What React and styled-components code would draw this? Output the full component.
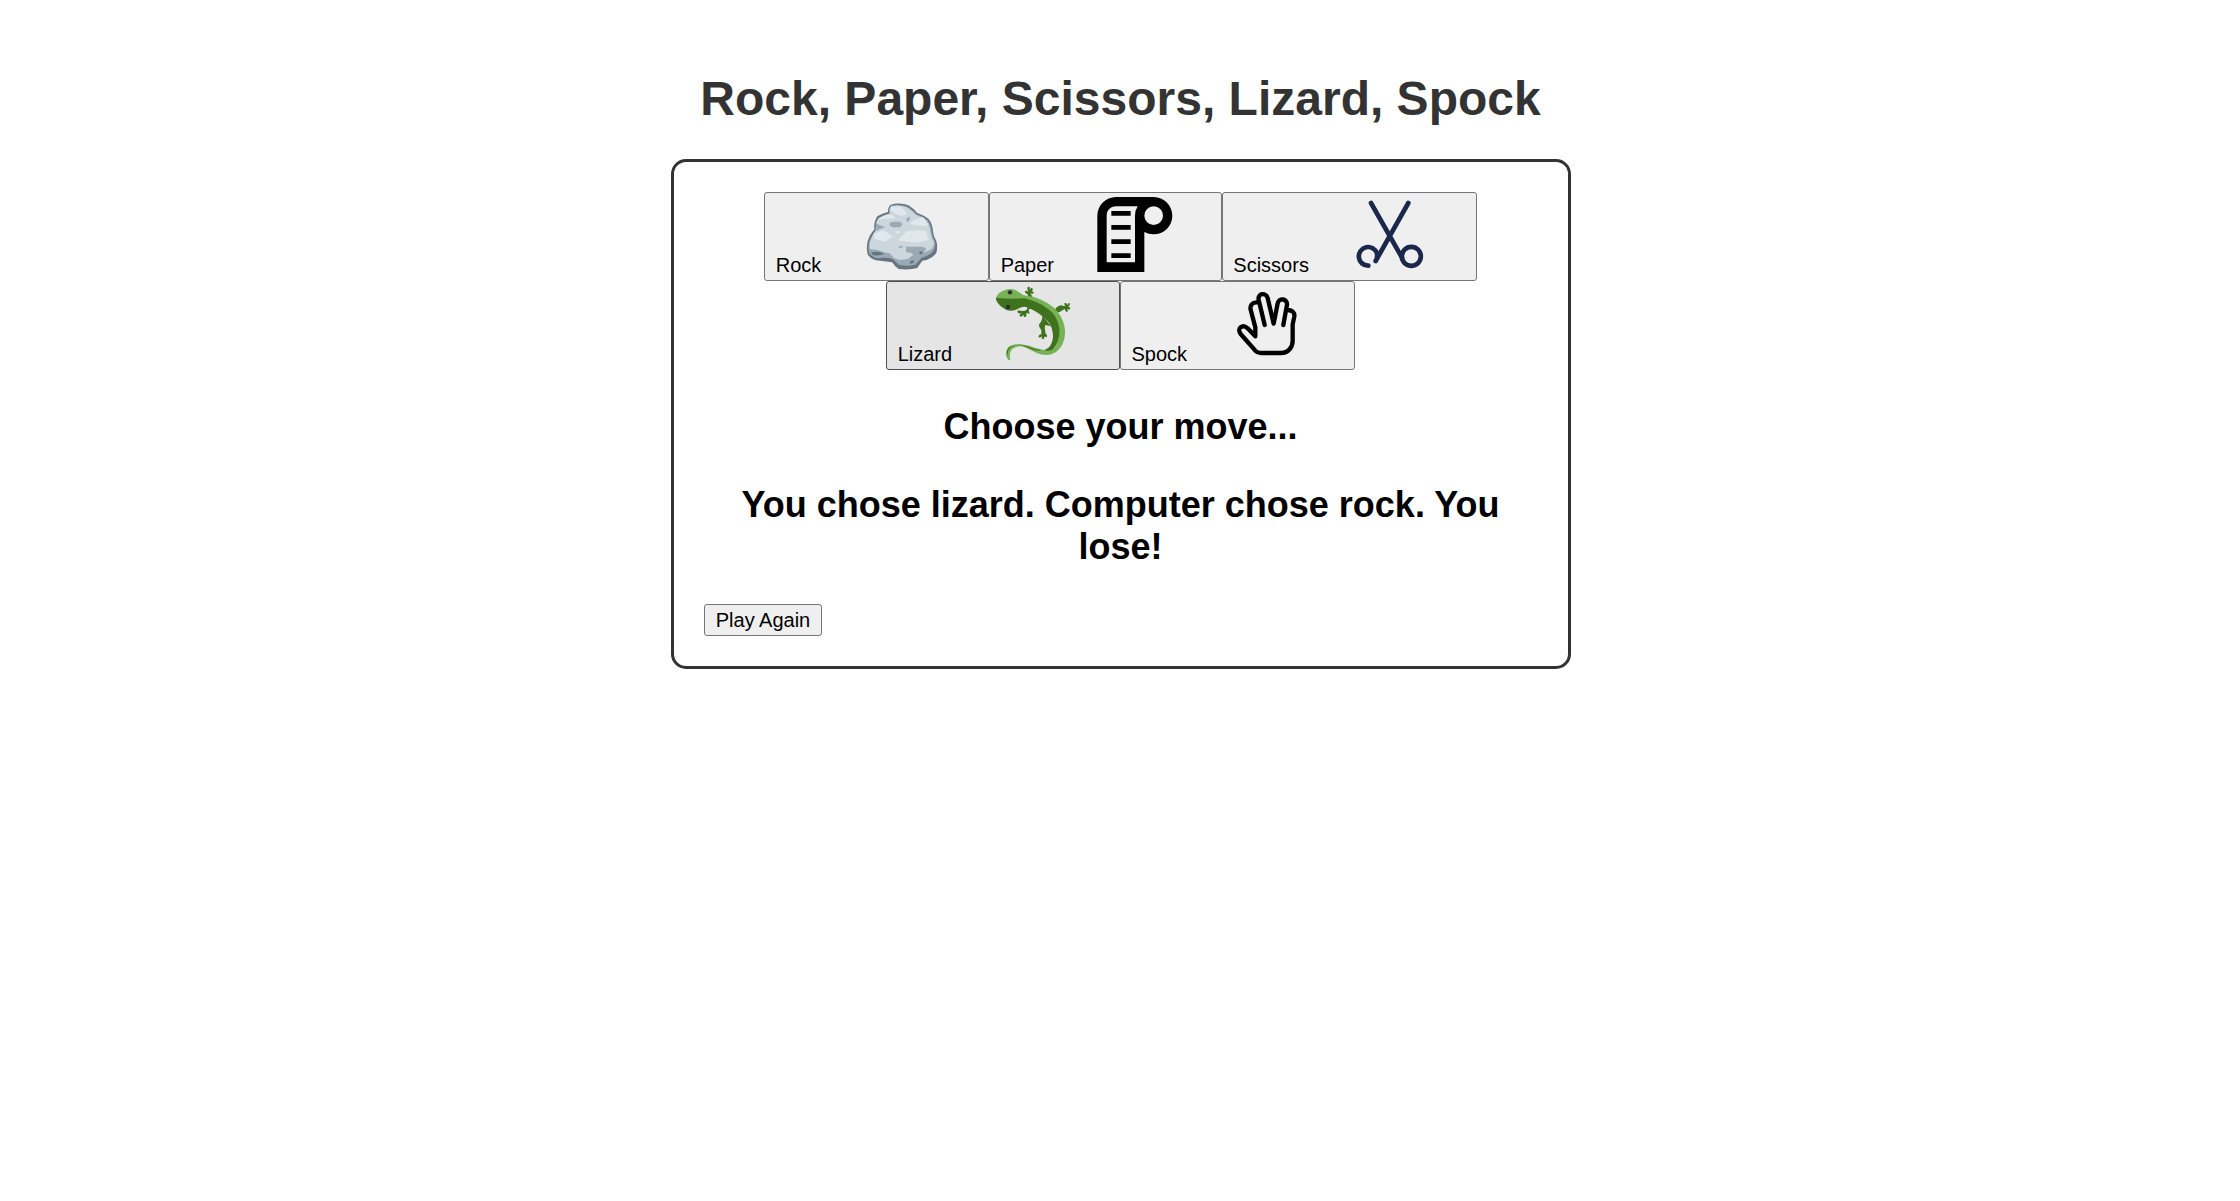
import React from "react";
import styled, { createGlobalStyle } from "styled-components";

const GlobalStyle = createGlobalStyle`
  body {
    margin: 0;
    padding: 0 0 0 2px;
    background: #fff;
    color: #000;
    font-family: "Liberation Sans", Arial, sans-serif;
  }
`;

const Page = styled.main`
  display: flex;
  flex-direction: column;
  align-items: center;
  padding-top: 71px;
`;

const Title = styled.h1`
  margin: 0 1px 33px 0;
  color: #333;
  font-size: 48px;
  line-height: 55px;
`;

const Game = styled.section`
  box-sizing: border-box;
  width: 900px;
  padding: 30px;
  border: 3px solid #333;
  border-radius: 15px;
`;

const Moves = styled.div`
  display: flex;
  flex-wrap: wrap;
  justify-content: center;
  padding: 0 46px 0 45px;
`;

const Button = styled.button`
  box-sizing: border-box;
  border: 1px solid ${(p) => (p.$hovered ? "#4f4f4f" : "#767676")};
  border-radius: 3px;
  background: ${(p) => (p.$hovered ? "#e5e5e5" : "#efefef")};
  color: #000;
  font-family: inherit;
  font-size: 20px;
  line-height: 23px;
`;

const MoveButton = styled(Button)`
  display: flex;
  align-items: flex-end;
  gap: 4px;
  height: 89px;
  padding: 0 8.8px 3px 10.5px;
`;

const PlayAgain = styled(Button)`
  display: block;
  width: 118px;
  height: 32px;
  padding: 0;
  white-space: nowrap;
`;

const Art = styled.svg`
  width: 154px;
  height: 75px;
  margin-bottom: 5px;
  overflow: visible;
`;

const Message = styled.h2`
  margin: 36px 1px 36px 0;
  font-size: 36px;
  line-height: 42px;
  text-align: center;
`;

const RockArt = () => (
  <Art viewBox="-75 21 462 225">
    <path fill="#66757f" d="M121 45Q148 36 175 46Q190 55 201 68Q222 76 235 86Q246 97 249 123Q249 138 259 153Q264 171 259 188Q250 203 232 209L217 212Q208 224 202 234Q178 241 146 237Q134 230 127 217L78 211Q60 206 53 193Q48 174 53 153Q58 135 73 118Q71 94 82 79Q97 70 114 66Q114 51 121 45Z" />
    <path fill="#9aaab4" d="M123 48Q148 41 172 50Q187 60 199 72Q220 80 232 90Q242 101 245 125Q246 140 255 155Q257 174 250 184Q238 197 215 203Q205 214 196 224Q168 230 146 224Q136 213 128 207Q103 201 83 205Q65 202 57 188Q53 170 58 153Q64 138 77 122Q75 98 86 84Q98 75 119 70Q117 54 123 48Z" />
    <path fill="#ccd6dd" d="M123 48Q148 43 170 52Q187 61 197 74Q217 81 229 92Q239 104 241 126Q244 143 252 158Q251 174 239 180L221 189L217 174L168 170L170 186Q184 184 190 194L174 207L148 210L132 204L119 190Q102 188 83 180L60 177Q57 160 64 145Q68 133 78 121L105 112L80 102Q77 90 90 83Q104 76 120 72Q116 58 123 48Z" />
    <path fill="#e1e8ed" d="M124 52Q145 46 157 53L172 72L155 78L137 71L119 60ZM85 86Q106 74 120 72L139 84L91 88ZM179 101L191 91L218 81Q230 90 233 107Q211 108 194 105ZM70 132L98 121L130 139L104 156L73 146ZM148 146L170 124L206 120L228 124L237 148Q216 159 179 156L148 152ZM135 126L143 122L151 127L142 132Z" />
    <path fill="#9aaab4" d="M119 98L130 95H149L158 102L151 112H129L119 107ZM79 103L105 111L75 123ZM172 83L180 80L178 92L171 95L168 89ZM144 170L151 167L160 171L152 175ZM169 170H218L229 177L220 189L196 191L168 186Z" />
    <path fill="#66757f" d="M63 187Q85 182 104 191Q93 198 69 196ZM207 187Q213 180 219 187Q217 194 210 192ZM179 217Q185 208 193 214Q190 223 181 221ZM103 205Q119 202 128 208L137 225Q127 218 122 213Z" />
  </Art>
);

const PaperArt = () => (
  <Art viewBox="-66 21 462 225">
    <path fillRule="evenodd" d="M108 21H221C252 21 277 46 277 77C277 108 252 133 221 133Q205 133 193 126V246H52V77C52 46 77 21 108 21ZM108 49C92 49 80 61 80 77V217H165V77Q165 61 173 49ZM221 49A28 28 0 1 0 221 105A28 28 0 1 0 221 49ZM94 63H152V77H94ZM94 105H152V119H94ZM94 148H152V162H94ZM94 190H152V204H94Z" />
  </Art>
);

const ScissorsArt = () => (
  <Art viewBox="-80 21 462 225" fill="none" stroke="#1c274c" strokeWidth="14" strokeLinecap="round">
    <path d="M94 39L187 203M206 39L108 213M108 213Q114 203 112 190A28 28 0 1 0 86 227" />
    <circle cx="215" cy="199" r="28.5" />
  </Art>
);

const LizardArt = () => (
  <Art viewBox="-72 24 462 225">
    <path fill="#3e721d" d="M145 61L143 49Q133 45 135 39Q140 36 144 42L142 29Q147 23 150 29L149 36L154 29Q160 30 158 37L154 40Q162 40 161 46Q155 49 150 46Q158 53 160 66ZM158 82L146 96L149 107L139 105Q141 114 136 117Q129 119 131 110L124 116Q116 116 120 108L127 105Q115 109 112 102Q112 95 120 98L133 99L140 95L146 80ZM221 102Q227 85 243 82L252 84L257 83Q250 78 255 74Q261 75 262 81Q265 72 270 77Q269 84 264 86Q273 87 270 94Q265 95 262 92Q266 100 260 102Q254 98 254 93Q240 104 224 106ZM188 112L196 124L213 145L196 141L194 149L197 168Q203 169 201 176Q196 179 193 175Q194 184 188 184Q183 181 186 175Q178 182 175 175Q178 169 184 169L184 157L177 145Q176 137 183 131L186 124Z" />
    <path fill="#77b255" d="M48 59Q52 44 75 36Q91 29 108 37Q117 43 131 52Q170 56 202 75Q236 95 249 130Q259 157 253 182Q246 215 216 228Q194 235 170 225L138 209Q119 201 103 209Q85 218 91 244Q88 251 81 240Q75 223 83 210Q92 198 119 198Q144 201 170 211Q196 220 217 213Q237 200 236 166Q233 129 208 112Q180 89 130 75L50 63Z" />
    <path fill="#3e721d" d="M48 59Q82 64 133 61Q172 69 203 92Q233 113 238 151Q241 193 217 215Q207 220 193 217Q216 208 219 178Q219 148 205 132Q181 103 138 87Q127 85 117 91Q98 102 80 96Q56 84 48 65ZM81 235Q78 219 85 211Q98 199 125 202Q144 204 164 213L184 216Q174 220 155 214Q132 203 114 202Q91 204 85 217Z" />
    <circle cx="90" cy="43" r="6.5" fill="#292f33" />
    <circle cx="84" cy="87" r="6.5" fill="#292f33" />
  </Art>
);

const SpockArt = () => (
  <Art viewBox="-86 24 462 225" fill="none" stroke="#000" strokeWidth="13" strokeLinecap="round" strokeLinejoin="round">
    <path d="M135 141L117 65C113 46 139 42 144 60L162 137L174 76C178 58 204 62 202 80L191 141" />
    <path d="M112 73C98 72 90 83 93 95L107 148V175L84 151C69 137 50 151 63 168L107 218Q114 225 123 225H184C206 225 219 207 219 188V139L224 115Q226 98 205 96" />
  </Art>
);

const moves = [
  { name: "Rock", Picture: RockArt },
  { name: "Paper", Picture: PaperArt },
  { name: "Scissors", Picture: ScissorsArt },
  { name: "Lizard", Picture: LizardArt, hovered: true },
  { name: "Spock", Picture: SpockArt },
];

export default function App() {
  return (
    <>
      <GlobalStyle />
      <Page>
        <Title>Rock, Paper, Scissors, Lizard, Spock</Title>
        <Game>
          <Moves>
            {moves.map(({ name, Picture, hovered }) => (
              <MoveButton key={name} $hovered={hovered}>
                {name}
                <Picture />
              </MoveButton>
            ))}
          </Moves>
          <Message>Choose your move...</Message>
          <Message>You chose lizard. Computer chose rock. You lose!</Message>
          <PlayAgain>Play Again</PlayAgain>
        </Game>
      </Page>
    </>
  );
}
